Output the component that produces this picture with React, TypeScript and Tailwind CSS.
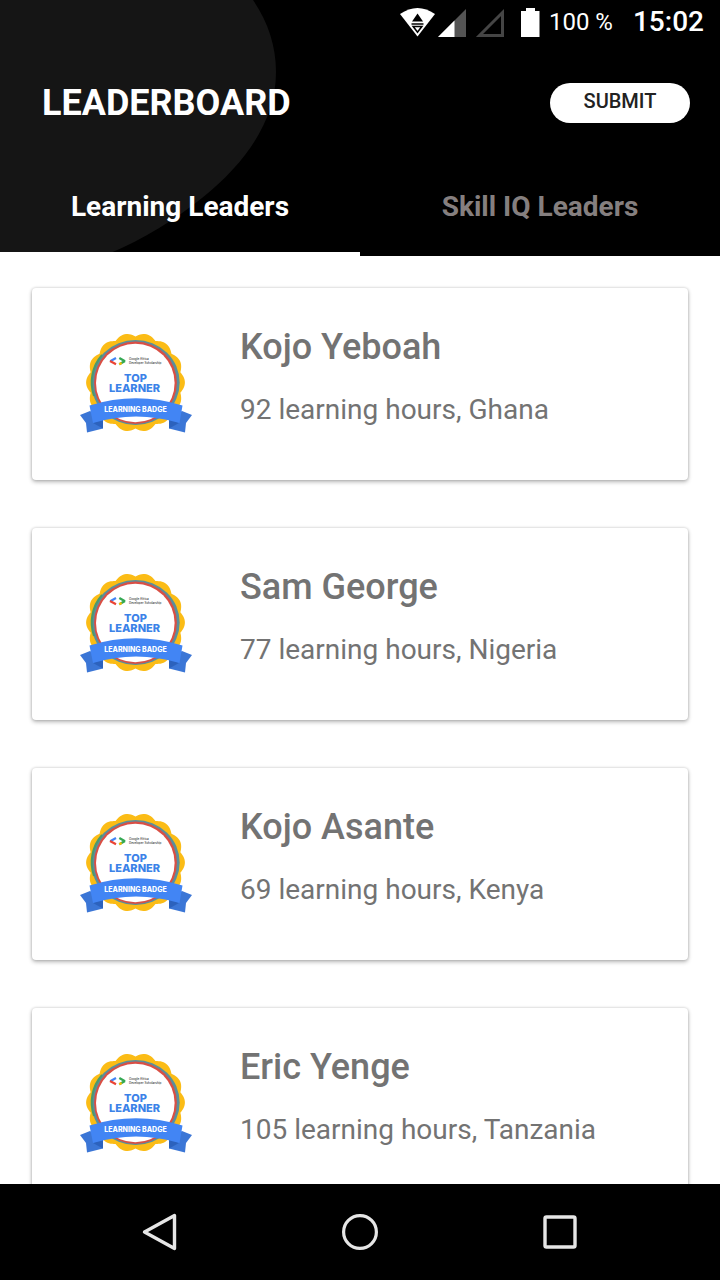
import { useState } from "react";

type Leader = { name: string; hours: number; country: string };

const leaders: Leader[] = [
  { name: "Kojo Yeboah", hours: 92, country: "Ghana" },
  { name: "Sam George", hours: 77, country: "Nigeria" },
  { name: "Kojo Asante", hours: 69, country: "Kenya" },
  { name: "Eric Yenge", hours: 105, country: "Tanzania" },
];

const tabs = ["Learning Leaders", "Skill IQ Leaders"];

// Scalloped outline of the seal: fourteen lobes around (55.5, 56.5).
const seal = Array.from({ length: 196 }, (_, i) => {
  const a = (i / 196) * Math.PI * 2;
  const r = 46 + 3.4 * Math.abs(Math.sin(a * 7));
  return `${(55.5 + r * Math.sin(a)).toFixed(2)},${(56.5 - r * Math.cos(a)).toFixed(2)}`;
}).join(" ");

function Badge() {
  return (
    <svg viewBox="0 0 112 112" className="size-28 shrink-0" role="img" aria-label="Top learner badge">
      <polygon points={seal} fill="#fbbc16" />
      <ellipse cx="55.5" cy="56.5" rx="44.2" ry="42.6" fill="#5a8f9c" />
      <path d="M22 29A44 42.6 0 0 0 14 70" fill="none" stroke="#4c9a6a" strokeWidth="2" />
      <ellipse cx="55.5" cy="56.7" rx="41.4" ry="41.2" fill="#d94f45" />
      <ellipse cx="55.3" cy="57" rx="39.3" ry="39.3" fill="#fff" />
      <g fill="none" strokeWidth="2.2">
        <path d="M36 32L30.2 35.2" stroke="#4285f4" />
        <path d="M30 35L36 38.3" stroke="#ea4335" />
        <path d="M39.3 32L45 35.3" stroke="#34a853" />
        <path d="M45 35L39.3 38.3" stroke="#34a853" />
        <path d="M39.3 38.3L41.6 37" stroke="#fbbc04" />
      </g>
      <g fill="#333" className="font-['Inter',sans-serif] text-[3px] font-medium">
        <text x="49" y="34">Google Africa</text>
        <text x="49" y="38">Developer Scholarship</text>
      </g>
      <g fill="#3b82e8" textAnchor="middle" className="font-['Inter',sans-serif] text-[11px] font-extrabold">
        <text x="55.5" y="56">TOP</text>
        <text x="54.5" y="66">LEARNER</text>
      </g>
      <path d="M10 85L0 89L6 97L7 106.5L23 102.5V92Z" fill="#3b76d6" />
      <path d="M102 85L112 89L106 97L105 106.5L89 102.5V92Z" fill="#3b76d6" />
      <path d="M13 97L23 102.5V92Z" fill="#2c62bd" />
      <path d="M99 97L89 102.5V92Z" fill="#2c62bd" />
      <path d="M9.5 79.5Q56 65 102.5 79.5L99.500 97Q56 84 13 97Z" fill="#4285f4" />
      <text x="55.5" y="86" textAnchor="middle" fill="#fff" className="font-['Inter',sans-serif] text-[7px] font-extrabold">
        LEARNING BADGE
      </text>
    </svg>
  );
}

function StatusBar() {
  return (
    <div className="flex h-11 items-center justify-end pr-4 text-white">
      <svg viewBox="0 0 144 30" className="mr-2 h-[30px] w-36" role="img" aria-label="Wi-Fi, signal and battery">
        <path d="M3 7Q20.5-5 38 7L20.5 29.5Z" fill="#fff" />
        <path d="M20.5 6.500L26 14.5H15Z" fill="#000" />
        <path d="M14.5 17H26.5" stroke="#000" strokeWidth="1.5" />
        <path d="M16.2 19.5H24.8L20.5 25.200Z" fill="none" stroke="#000" strokeWidth="1.6" />
        <path d="M69 2V30H41Z" fill="#545454" />
        <path d="M57.5 13.5V30H41Z" fill="#fff" />
        <path d="M105.5 5.500V28.5H82.500Z" fill="none" stroke="#454545" strokeWidth="3" />
        <path d="M129 1H138V4H142.5V30H124V4H129Z" fill="#fff" />
      </svg>
      <span className="mr-5 text-2xl">100 %</span>
      <span className="text-[28px] font-medium">15:02</span>
    </div>
  );
}

export default function App() {
  const [active, setActive] = useState(0);
  return (
    <div className="flex h-screen flex-col bg-white font-['Roboto',sans-serif]">
      <header className="relative shrink-0 bg-black">
        <svg viewBox="0 0 280 256" className="absolute top-0 left-0 h-full" aria-hidden="true">
          <path d="M0 0H253C268 22 276 46 276 72C276 120 246 163 202 198C176 219 144 239 108 254V256H0Z" fill="#151515" />
        </svg>
        <div className="relative">
          <StatusBar />
          <div className="flex h-[118px] items-center justify-between pr-[30px] pl-[42px]">
            <h1 className="text-4xl font-bold text-white">LEADERBOARD</h1>
            <button type="button" className="h-10 w-[140px] rounded-full bg-white pb-1 text-xl font-medium text-[#222]">
              SUBMIT
            </button>
          </div>
          <div role="tablist" className="grid grid-cols-2">
            {tabs.map((tab, i) => (
              <button
                key={tab}
                type="button"
                role="tab"
                aria-selected={active === i}
                onClick={() => setActive(i)}
                className={
                  active === i
                    ? "h-[94px] border-b-4 border-white text-[28px] font-bold text-white"
                    : "h-[94px] border-b-4 border-black text-[28px] font-bold text-[#857f7f]"
                }
              >
                {tab}
              </button>
            ))}
          </div>
        </div>
      </header>

      <main className="min-h-0 flex-1 overflow-y-auto p-8 [scrollbar-width:none]">
        <ul className="flex flex-col gap-12">
          {leaders.map((leader) => (
            <li
              key={leader.name}
              className="flex h-48 items-start gap-12 rounded-sm bg-white px-12 pt-[38px] shadow-[0_2px_4px_rgba(0,0,0,0.28),0_0_3px_rgba(0,0,0,0.18)]"
            >
              <Badge />
              <div className="flex flex-col gap-[22px] text-[#737373]">
                <h2 className="text-4xl leading-[42px] font-medium">{leader.name}</h2>
                <p className="text-[28px] leading-10">
                  {leader.hours} learning hours, {leader.country}
                </p>
              </div>
            </li>
          ))}
        </ul>
      </main>

      <nav className="flex h-24 shrink-0 items-center justify-center gap-[152px] bg-black text-[#e6e6e6]">
        <button type="button" aria-label="Back">
          <svg viewBox="0 0 48 48" className="size-12" fill="none" stroke="currentColor" strokeWidth="3.4" strokeLinejoin="round">
            <path d="M38.5 7.500V40.500L8.500 24Z" />
          </svg>
        </button>
        <button type="button" aria-label="Home">
          <svg viewBox="0 0 48 48" className="size-12" fill="none" stroke="currentColor" strokeWidth="3.2">
            <circle cx="24" cy="24" r="16.4" />
          </svg>
        </button>
        <button type="button" aria-label="Recent apps">
          <svg viewBox="0 0 48 48" className="size-12" fill="none" stroke="currentColor" strokeWidth="3.4">
            <rect x="9" y="9" width="30" height="30" rx="1.500" />
          </svg>
        </button>
      </nav>
    </div>
  );
}
